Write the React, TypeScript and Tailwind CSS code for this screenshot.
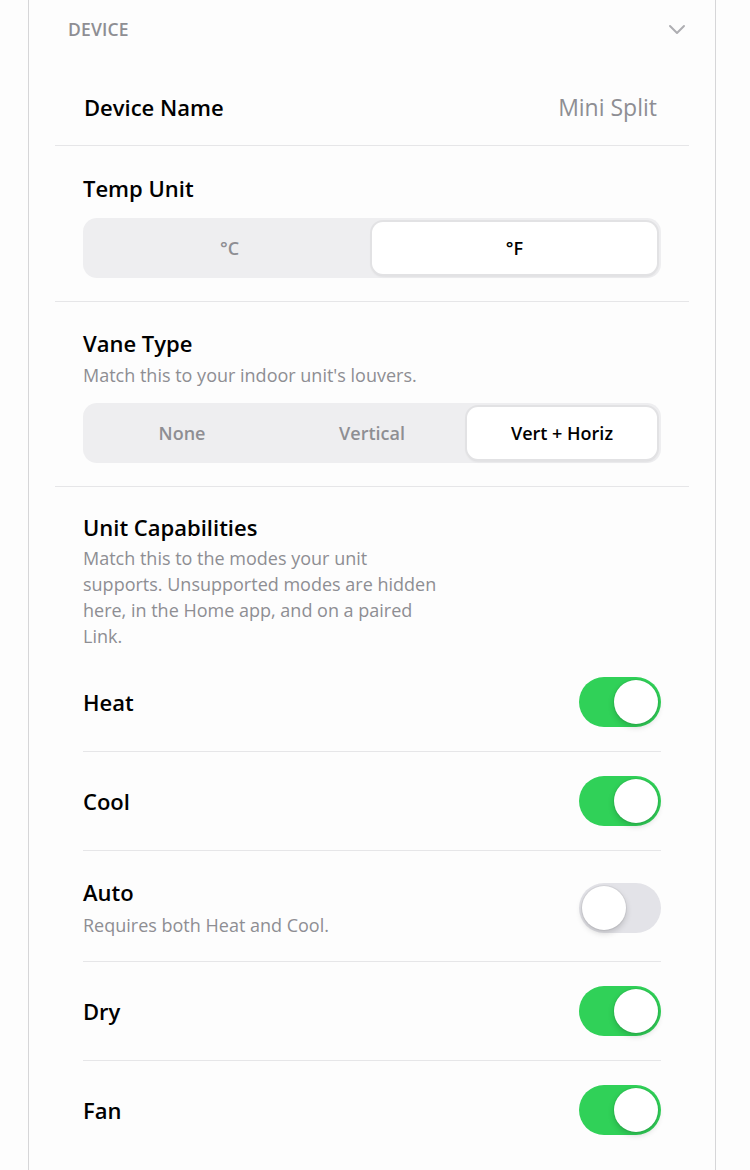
import React from "react";

const font = { fontFamily: '"Open Sans", "Noto Sans", sans-serif' };

const Toggle = ({ on }: { on: boolean }) => (
  <div
    className={`flex h-[50px] w-[82px] shrink-0 items-center rounded-full p-[3px] ${
      on ? "justify-end bg-[#30d158]" : "justify-start bg-[#e3e3e8]"
    }`}
  >
    <div className="h-[44px] w-[44px] rounded-full bg-white shadow-[0_3px_6px_rgba(0,0,0,0.18),0_0_0_1px_rgba(0,0,0,0.05)]" />
  </div>
);

const Segmented = ({ options, selected }: { options: string[]; selected: number }) => (
  <div
    className={`grid h-[60px] rounded-[14px] bg-[#eeeef0] p-[4px] ${
      options.length === 3 ? "grid-cols-3" : "grid-cols-2"
    }`}
  >
    {options.map((o, i) => (
      <div
        key={o}
        className={`flex items-center justify-center rounded-[11px] text-[18px] font-semibold ${
          i === selected
            ? "bg-white text-black shadow-[0_2px_3px_rgba(0,0,0,0.12)] ring-2 ring-[#e2e2e4]"
            : "text-[#8e8e93]"
        }`}
      >
        {o}
      </div>
    ))}
  </div>
);

const Row = ({ label, desc, on }: { label: string; desc?: string; on: boolean }) => (
  <div
    className={`flex items-center justify-between border-b border-[#e6e6e8] last:border-b-0 ${
      desc ? "pt-[27px] pb-[23px]" : "py-[24px]"
    }`}
  >
    <div className="flex flex-col">
      <span className="text-[22px] font-semibold leading-[28px] text-black">{label}</span>
      {desc && <span className="mt-[6px] text-[18px] leading-[26px] text-[#8e8e93]">{desc}</span>}
    </div>
    <Toggle on={on} />
  </div>
);

export default function App() {
  return (
    <div className="min-h-[1170px] bg-[#fdfdfd]" style={font}>
      <div className="ml-[28px] mr-[34px] min-h-[1170px] border-x border-[#d6d6d8] px-[26px]">
        <div className="flex items-center justify-between pl-[13px] pr-[3px] pt-[16px] pb-[25px]">
          <span className="text-[17.5px] font-semibold tracking-[0.01em] text-[#8e8e93]">DEVICE</span>
          <svg width="18" height="12" viewBox="0 0 18 12" fill="none">
            <polyline points="2,3 9,10 16,3" stroke="#aeaeb2" strokeWidth="2" strokeLinecap="round" strokeLinejoin="round" />
          </svg>
        </div>

        <div className="flex h-[79px] items-center justify-between border-b border-[#e6e6e8] px-[29px] pt-[2px]">
          <span className="text-[22px] font-semibold text-black">Device Name</span>
          <span className="pr-[3px] text-[23px] text-[#8e8e93]">Mini Split</span>
        </div>

        <div className="border-b border-[#e6e6e8] px-[28px] pt-[28px] pb-[23px]">
          <div className="mb-[16px] text-[22px] font-semibold leading-[28px] text-black">Temp Unit</div>
          <Segmented options={["°C", "°F"]} selected={1} />
        </div>

        <div className="border-b border-[#e6e6e8] px-[28px] pt-[27px] pb-[23px]">
          <div className="text-[22px] font-semibold leading-[28px] text-black">Vane Type</div>
          <div className="mt-[5px] mb-[15px] text-[18px] leading-[26px] text-[#8e8e93]">
            Match this to your indoor unit's louvers.
          </div>
          <Segmented options={["None", "Vertical", "Vert + Horiz"]} selected={2} />
        </div>

        <div className="px-[28px] pt-[26px]">
          <div className="text-[22px] font-semibold leading-[28px] text-black">Unit Capabilities</div>
          <div className="mt-[4px] mb-[4px] max-w-[360px] text-[18px] leading-[26px] text-[#8e8e93]">
            Match this to the modes your unit supports. Unsupported modes are hidden here, in the Home app, and on a
            paired Link.
          </div>
          <Row label="Heat" on />
          <Row label="Cool" on />
          <Row label="Auto" desc="Requires both Heat and Cool." on={false} />
          <Row label="Dry" on />
          <Row label="Fan" on />
        </div>
      </div>
    </div>
  );
}
